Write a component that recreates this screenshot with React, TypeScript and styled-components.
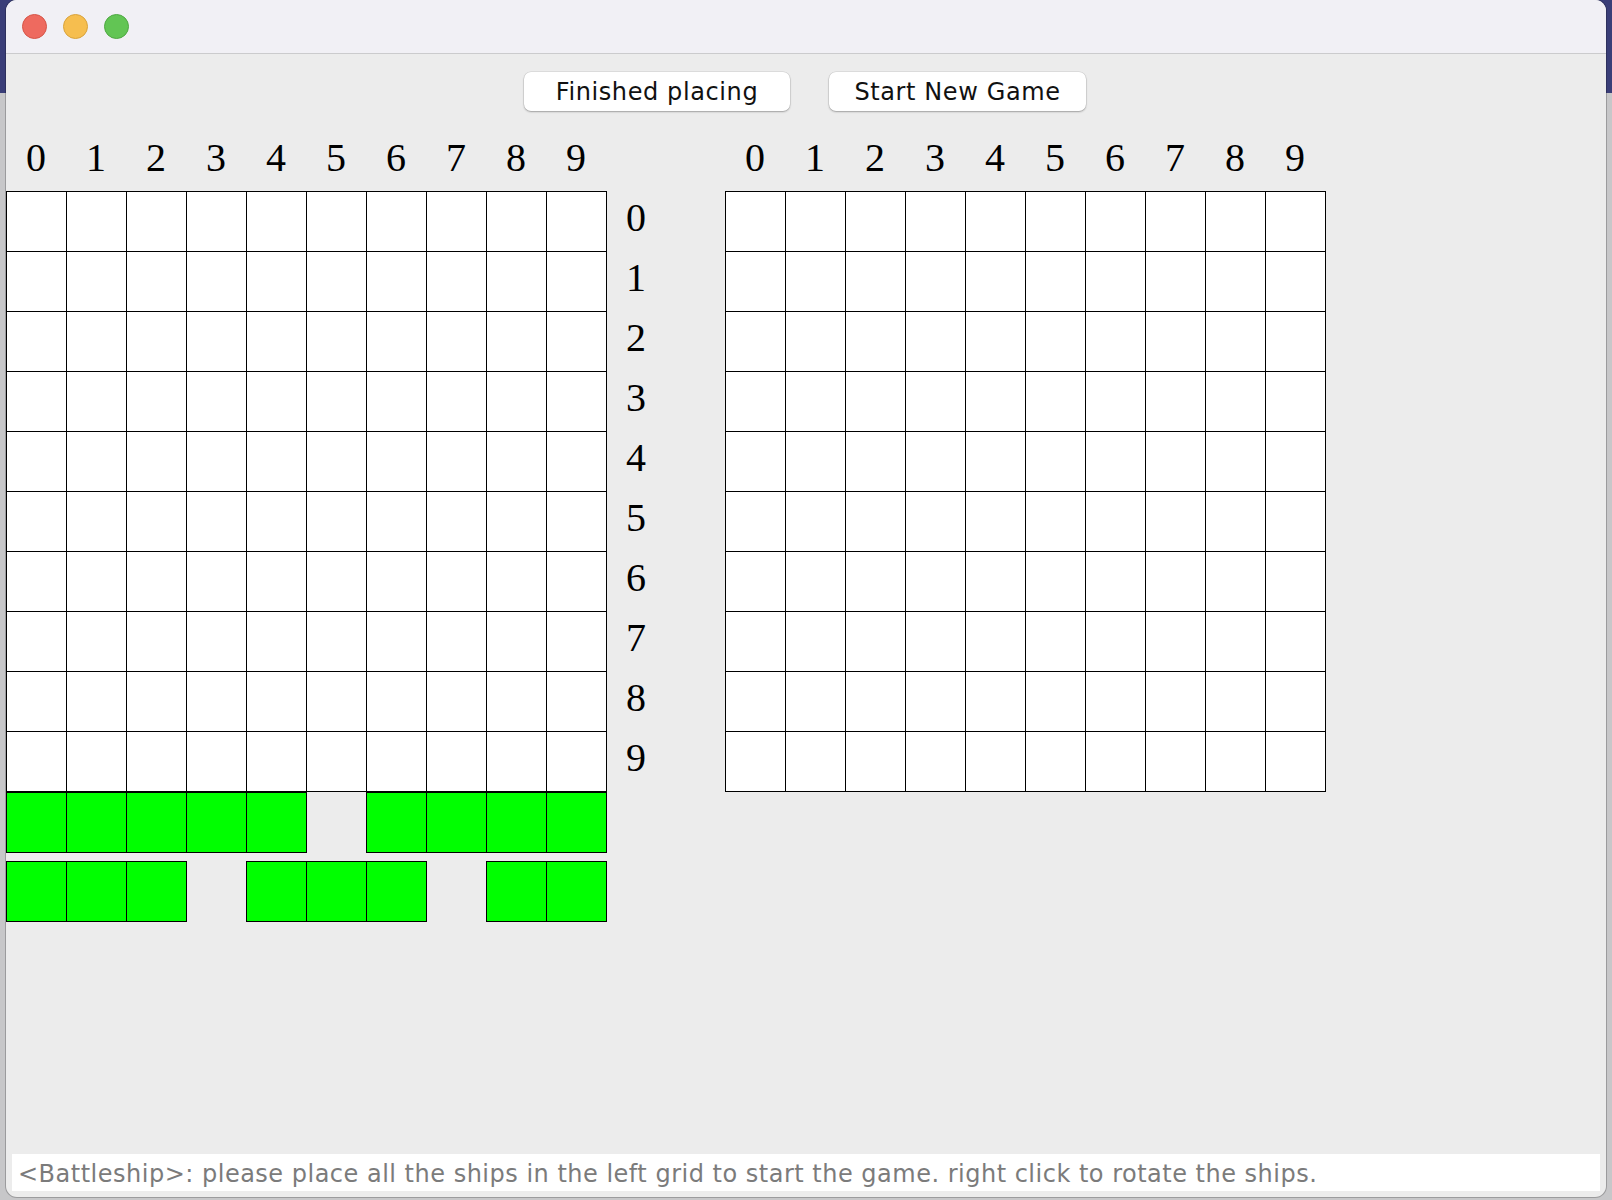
import React from "react";
import styled, { createGlobalStyle } from "styled-components";

const GlobalStyle = createGlobalStyle`
  html, body {
    margin: 0;
    padding: 0;
  }
  body {
    width: 1612px;
    height: 1200px;
    overflow: hidden;
    background: linear-gradient(to bottom, #3a3e78 0, #3a3e78 93px, #c7c7c9 93px, #c7c7c9 100%);
    font-family: "DejaVu Sans", "Open Sans", sans-serif;
  }
`;

const Desktop = styled.div`
  width: 1612px;
  height: 1200px;
  box-sizing: border-box;
  padding-left: 6px;
`;

const Window = styled.div`
  width: 1600px;
  height: 1197px;
  border-radius: 11px;
  background: #ececec;
  overflow: hidden;
  display: flex;
  flex-direction: column;
  box-shadow: 0 0 0 1px rgba(0, 0, 0, 0.22);
`;

const TitleBar = styled.div`
  height: 53px;
  flex: none;
  background: #f1f0f5;
  border-bottom: 1px solid #cbcbcd;
  display: flex;
  align-items: center;
  gap: 16px;
  padding-left: 16px;
`;

const Light = styled.span<{ $fill: string; $edge: string }>`
  width: 23px;
  height: 23px;
  border-radius: 50%;
  background: ${(p) => p.$fill};
  border: 0.5px solid ${(p) => p.$edge};
`;

const Body = styled.div`
  flex: 1;
  display: flex;
  flex-direction: column;
`;

const ButtonBar = styled.div`
  display: flex;
  gap: 39px;
  margin-top: 18px;
  padding-left: 518px;
`;

const Button = styled.button<{ $w: number }>`
  width: ${(p) => p.$w}px;
  height: 39px;
  border: none;
  border-radius: 7px;
  background: #ffffff;
  box-shadow: 0 0 0 0.5px rgba(0, 0, 0, 0.12), 0 1px 2px rgba(0, 0, 0, 0.28);
  font-family: "DejaVu Sans", "Open Sans", sans-serif;
  font-size: 24px;
  letter-spacing: 0.6px;
  color: #111;
  padding: 0;
  cursor: pointer;
`;

const Boards = styled.div`
  display: flex;
  margin-top: 30px;
`;

const Board = styled.div`
  display: flex;
  flex-direction: column;
`;

const Header = styled.div`
  display: grid;
  grid-template-columns: repeat(10, 60px);
  height: 50px;
`;

const HeaderNum = styled.span`
  font-family: "Liberation Serif", "Times New Roman", serif;
  font-size: 40px;
  line-height: 34px;
  text-align: center;
  color: #000;
`;

const Grid = styled.div`
  display: grid;
  grid-template-columns: repeat(10, 60px);
  border-top: 1px solid #000;
  border-left: 1px solid #000;
  width: 600px;
`;

const Cell = styled.div`
  width: 60px;
  height: 60px;
  box-sizing: border-box;
  border-right: 1px solid #000;
  border-bottom: 1px solid #000;
  background: #fff;
`;

const RowLabels = styled.div`
  width: 118px;
  margin-top: 50px;
  display: flex;
  flex-direction: column;
`;

const RowLabel = styled.span`
  height: 60px;
  line-height: 54px;
  padding-left: 19px;
  font-family: "Liberation Serif", "Times New Roman", serif;
  font-size: 40px;
  color: #000;
`;

const ShipRow = styled.div<{ $gapTop: number }>`
  display: grid;
  grid-template-columns: repeat(10, 60px);
  margin-top: ${(p) => p.$gapTop}px;
`;

const Ship = styled.div<{ $start: number; $len: number }>`
  grid-column: ${(p) => p.$start + 1} / span ${(p) => p.$len};
  display: flex;
  border-top: 1px solid #000;
  border-left: 1px solid #000;
  width: ${(p) => p.$len * 60}px;
`;

const ShipCell = styled.div`
  width: 60px;
  height: 60px;
  box-sizing: border-box;
  border-right: 1px solid #000;
  border-bottom: 1px solid #000;
  background: #00ff00;
`;

const StatusBar = styled.div`
  margin: auto 6px 6px 6px;
  height: 37px;
  background: #fff;
  padding-left: 6px;
  font-family: "DejaVu Sans", "Open Sans", sans-serif;
  font-size: 24px;
  letter-spacing: 0.5px;
  line-height: 41px;
  color: #7b7b7b;
  white-space: nowrap;
  overflow: hidden;
`;

const digits = [0, 1, 2, 3, 4, 5, 6, 7, 8, 9];

const BoardGrid: React.FC = () => (
  <Grid>
    {Array.from({ length: 100 }, (_, i) => (
      <Cell key={i} />
    ))}
  </Grid>
);

const ColumnHeader: React.FC = () => (
  <Header>
    {digits.map((d) => (
      <HeaderNum key={d}>{d}</HeaderNum>
    ))}
  </Header>
);

const shipRows: { start: number; len: number }[][] = [
  [
    { start: 0, len: 5 },
    { start: 6, len: 4 },
  ],
  [
    { start: 0, len: 3 },
    { start: 4, len: 3 },
    { start: 8, len: 2 },
  ],
];

export default function App() {
  return (
    <>
      <GlobalStyle />
      <Desktop>
        <Window>
          <TitleBar>
            <Light $fill="#ee6a5f" $edge="#d65548" />
            <Light $fill="#f6be4f" $edge="#d9a33c" />
            <Light $fill="#62c554" $edge="#4ea842" />
          </TitleBar>
          <Body>
            <ButtonBar>
              <Button $w={266}>Finished placing</Button>
              <Button $w={257}>Start New Game</Button>
            </ButtonBar>
            <Boards>
              <Board>
                <ColumnHeader />
                <BoardGrid />
                {shipRows.map((row, ri) => (
                  <ShipRow key={ri} $gapTop={ri === 0 ? 0 : 8}>
                    {row.map((s, si) => (
                      <Ship key={si} $start={s.start} $len={s.len}>
                        {Array.from({ length: s.len }, (_, ci) => (
                          <ShipCell key={ci} />
                        ))}
                      </Ship>
                    ))}
                  </ShipRow>
                ))}
              </Board>
              <RowLabels>
                {digits.map((d) => (
                  <RowLabel key={d}>{d}</RowLabel>
                ))}
              </RowLabels>
              <Board>
                <ColumnHeader />
                <BoardGrid />
              </Board>
            </Boards>
            <StatusBar>
              &lt;Battleship&gt;: please place all the ships in the left grid to start the game. right click to rotate the ships.
            </StatusBar>
          </Body>
        </Window>
      </Desktop>
    </>
  );
}
